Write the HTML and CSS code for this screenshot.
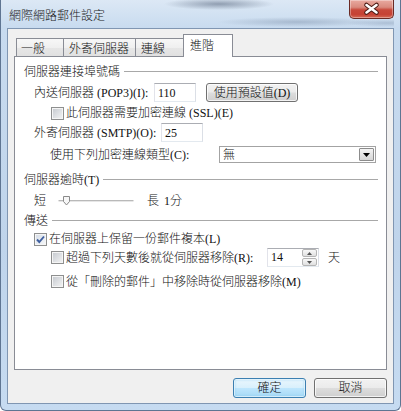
FILE: index.html
```html
<!DOCTYPE html>
<html lang="zh-Hant">
<head>
<meta charset="utf-8">
<title>網際網路郵件設定</title>
<link rel="stylesheet" href="styles.css">
</head>
<body>
<div class="window">
  <div class="titlebar">
    <span class="title">網際網路郵件設定</span>
    <div class="close">
      <svg width="43" height="18" viewBox="0 0 43 18">
        <path d="M16.5 5 L26.5 12.5 M26.5 5 L16.5 12.5" stroke="#4a1a14" stroke-width="4.6" stroke-linecap="round" fill="none"/>
        <path d="M16.5 5 L26.5 12.5 M26.5 5 L16.5 12.5" stroke="#ffffff" stroke-width="2.6" stroke-linecap="round" fill="none"/>
      </svg>
    </div>
  </div>
  <div class="client">
    <div class="tabs">
      <div class="tab t1">一般</div>
      <div class="tab t2">外寄伺服器</div>
      <div class="tab t3">連線</div>
      <div class="tab active">進階</div>
    </div>
    <div class="panel">
      <div class="group">伺服器連接埠號碼</div>
      <div class="row r-pop ind1">
        <span class="lbl w-pop">內送伺服器 (POP3)(I):</span>
        <span class="textbox w42">110</span>
        <span class="btn btn-def">使用預設值(D)</span>
      </div>
      <div class="row r-ssl ind2">
        <span class="cb"></span>
        <span class="lbl">此伺服器需要加密連線 (SSL)(E)</span>
      </div>
      <div class="row r-smtp ind1">
        <span class="lbl w-smtp">外寄伺服器 (SMTP)(O):</span>
        <span class="textbox w42">25</span>
      </div>
      <div class="row r-enc ind2b">
        <span class="lbl w-enc">使用下列加密連線類型(C):</span>
        <span class="select">
          <span class="sel-val">無</span>
          <span class="drop"><svg width="7" height="4" viewBox="0 0 7 4"><path d="M0 0 H7 L3.5 4 Z" fill="#000"/></svg></span>
        </span>
      </div>
      <div class="group g2">伺服器逾時(T)</div>
      <div class="row r-slider ind1">
        <span class="lbl">短</span>
        <svg class="slider" width="76" height="12" viewBox="0 0 76 12">
          <line x1="0.5" y1="5.5" x2="75.5" y2="5.5" stroke="#b9b9b9" stroke-width="1"/>
          <line x1="0.5" y1="6.5" x2="75.5" y2="6.5" stroke="#e6e6e6" stroke-width="1"/>
          <path d="M5.5 1.5 H11.5 V6.5 L8.5 10 L5.5 6.5 Z" fill="#f7f7f7" stroke="#8a8a8a" stroke-width="1"/>
        </svg>
        <span class="lbl long">長</span>
        <span class="lbl min">1分</span>
      </div>
      <div class="group g3">傳送</div>
      <div class="row r-l ind1">
        <span class="cb checked"><svg width="11" height="11" viewBox="0 0 11 11"><path d="M2 5.5 L4.3 8 L9 2.5" stroke="#3f5f9f" stroke-width="1.9" fill="none"/></svg></span>
        <span class="lbl">在伺服器上保留一份郵件複本(L)</span>
      </div>
      <div class="row r-r ind2">
        <span class="cb"></span>
        <span class="lbl w-r">超過下列天數後就從伺服器移除(R):</span>
        <span class="spin">
          <span class="spin-val">14</span>
          <span class="arrows">
            <span class="arr"><svg width="5" height="3" viewBox="0 0 5 3"><path d="M0 3 H5 L2.5 0 Z" fill="#555"/></svg></span>
            <span class="arr"><svg width="5" height="3" viewBox="0 0 5 3"><path d="M0 0 H5 L2.5 3 Z" fill="#555"/></svg></span>
          </span>
        </span>
        <span class="lbl day">天</span>
      </div>
      <div class="row r-m ind2">
        <span class="cb"></span>
        <span class="lbl">從「刪除的郵件」中移除時從伺服器移除(M)</span>
      </div>
    </div>
    <div class="actions">
      <span class="btn dlg default">確定</span>
      <span class="btn dlg">取消</span>
    </div>
  </div>
</div>
</body>
</html>
```

FILE: styles.css
```css
* { box-sizing: border-box; }
html, body { margin: 0; padding: 0; }
body {
  width: 401px;
  height: 411px;
  overflow: hidden;
  background: #ffffff;
  font-family: "Liberation Serif", "Noto Sans CJK TC", serif;
  font-size: 12px;
  font-weight: 300;
  color: #111;
}
.window {
  width: 401px;
  height: 411px;
  display: flex;
  flex-direction: column;
  border: 1px solid #5f7592;
  border-top: 0;
  border-radius: 0 0 6px 6px;
  padding: 0 6px 6px;
  background: linear-gradient(180deg, #dce8f5 0px, #c8dbef 28px, #bfd4eb 60%, #c6dbf1 100%);
}
.titlebar {
  height: 28px;
  flex: none;
  display: flex;
  justify-content: space-between;
  align-items: flex-start;
  background:
    radial-gradient(ellipse 55px 6px at 212px 4px, rgba(55,70,95,0.45), rgba(55,70,95,0)),
    radial-gradient(ellipse 80px 5px at 290px 22px, rgba(80,100,130,0.3), rgba(80,100,130,0)),
    radial-gradient(ellipse 40px 4px at 380px 23px, rgba(80,100,130,0.25), rgba(80,100,130,0));
}
.title {
  margin-top: 8px;
  padding-left: 2px;
  line-height: 14px;
  font-family: "Noto Sans CJK TC", sans-serif;
  font-size: 12px;
  color: #1a1a1a;
}
.close {
  width: 45px;
  height: 19px;
  border: 1px solid #6a2a24;
  border-top: 0;
  border-radius: 0 0 5px 5px;
  background: linear-gradient(180deg, #e9aaa0 0%, #d98a7e 40%, #c8483a 55%, #c64234 80%, #d56a55 100%);
  box-shadow: inset 0 0 0 1px rgba(255,255,255,0.35);
  display: flex;
  align-items: center;
  justify-content: center;
}
.close svg { display: block; }
.client {
  flex: 1;
  display: flex;
  flex-direction: column;
  background: #f0f0f0;
  border: 1px solid #8096b2;
}
.tabs {
  display: flex;
  align-items: flex-end;
  height: 23px;
  margin: 5px 0 0 8px;
  flex: none;
}
.tab {
  height: 19px;
  border: 1px solid #898c95;
  border-bottom: 0;
  margin-left: -1px;
  padding: 2px 0 0 4px;
  display: flex;
  align-items: center;
  line-height: 14px;
  background: linear-gradient(180deg, #f7f7f7 0%, #efefef 50%, #e6e6e6 51%, #e0e0e0 100%);
}
.tab.t1 { margin-left: 0; width: 48px; }
.tab.t2 { width: 73px; padding-left: 5px; }
.tab.t3 { width: 49px; padding-left: 5px; }
.tab.active {
  width: 50px;
  height: 23px;
  padding: 0 0 0 6px;
  background: #ffffff;
  position: relative;
  z-index: 1;
}
.panel {
  flex: none;
  height: 314px;
  margin: -1px 6px 0 6px;
  background: #ffffff;
  border: 1px solid #898c95;
  display: flex;
  flex-direction: column;
  padding: 6px 8px 0 9px;
}
.group {
  display: flex;
  align-items: center;
  height: 17px;
  line-height: 14px;
  flex: none;
}
.group::after {
  content: "";
  flex: 1;
  height: 1px;
  margin-left: 4px;
  background: #a8a8a8;
}
.g2 { margin-top: 8px; }
.g3 { margin-top: 1px; }
.row {
  display: flex;
  align-items: center;
  flex: none;
}
.lbl { line-height: 14px; white-space: nowrap; flex: none; }
.ind1 { padding-left: 10px; }
.ind2 { padding-left: 27px; }
.ind2b { padding-left: 26px; }
.r-pop { height: 19px; margin-top: 3px; }
.r-ssl { height: 20px; margin-top: 1px; }
.r-smtp { height: 19px; }
.r-enc { height: 17px; margin-top: 4px; }
.r-slider { height: 21px; margin-top: 2px; }
.r-l { height: 18px; margin-top: 1px; }
.r-r { height: 19px; }
.r-m { height: 19px; margin-top: 5px; }
.w-pop { width: 120px; }
.w-smtp { width: 127px; }
.w-enc { width: 169px; }
.w-r { width: 201px; }
.cb + .lbl { margin-left: 2px; }
.textbox {
  height: 19px;
  background: #fff;
  border: 1px solid;
  border-color: #abadb3 #dbdfe6 #e3e9ef #e2e3ea;
  padding-left: 3px;
  display: flex;
  align-items: center;
  line-height: 14px;
  flex: none;
}
.w42 { width: 42px; }
.btn {
  height: 19px;
  border: 1px solid #707070;
  border-radius: 3px;
  background: linear-gradient(180deg, #f2f2f2 0%, #ebebeb 48%, #dddddd 52%, #cfcfcf 100%);
  box-shadow: inset 0 0 0 1px rgba(255,255,255,0.75);
  display: flex;
  align-items: center;
  justify-content: center;
  line-height: 14px;
  flex: none;
}
.btn-def { width: 92px; margin-left: 10px; }
.cb {
  width: 13px;
  height: 13px;
  flex: none;
  border: 1px solid #8e8f8f;
  background: linear-gradient(135deg, #c3c7cd 0%, #dfe1e4 55%, #f4f4f4 100%);
  box-shadow: inset 0 0 0 1px #f5f5f5;
  display: flex;
  align-items: center;
  justify-content: center;
}
.cb.checked { background: linear-gradient(135deg, #d3dbe6 0%, #e8ecf1 55%, #f7f8fa 100%); }
.cb svg { display: block; }
.select {
  width: 157px;
  height: 17px;
  background: #fff;
  border: 1px solid #a3a3a3;
  display: flex;
  align-items: center;
  padding-left: 3px;
  flex: none;
}
.sel-val { flex: 1; line-height: 14px; }
.drop {
  width: 15px;
  height: 13px;
  margin-right: 1px;
  border: 1px solid #8c8c8c;
  border-radius: 1px;
  background: linear-gradient(180deg, #f4f4f4 0%, #e4e4e4 50%, #d6d6d6 100%);
  display: flex;
  align-items: center;
  justify-content: center;
}
.drop svg { display: block; }
.slider { display: block; margin-left: 12px; flex: none; }
.long { margin-left: 13px; }
.min { margin-left: 5px; }
.spin {
  width: 52px;
  height: 19px;
  background: #fff;
  border: 1px solid;
  border-color: #abadb3 #dbdfe6 #e3e9ef #e2e3ea;
  display: flex;
  flex: none;
}
.spin-val { flex: 1; padding-left: 3px; line-height: 17px; }
.arrows {
  width: 16px;
  display: flex;
  flex-direction: column;
  gap: 1px;
  padding: 0 1px 0 0;
}
.arr {
  flex: 1;
  border: 1px solid #b5b5b5;
  border-radius: 2px;
  background: linear-gradient(180deg, #f8f8f8, #e0e0e0);
  display: flex;
  align-items: center;
  justify-content: center;
}
.arr svg { display: block; }
.day { margin-left: 9px; }
.actions {
  display: flex;
  justify-content: flex-end;
  gap: 8px;
  margin-top: 8px;
  padding-right: 6px;
  flex: none;
}
.btn.dlg { width: 73px; height: 20px; }
.btn.default {
  border-color: #3c7fb1;
  background: linear-gradient(180deg, #eaf6fd 0%, #d9f0fc 48%, #bee6fd 52%, #a7d9f5 100%);
  box-shadow: inset 0 0 0 1px rgba(255,255,255,0.6), inset 0 0 2px 1px rgba(120,200,240,0.6);
}
```
